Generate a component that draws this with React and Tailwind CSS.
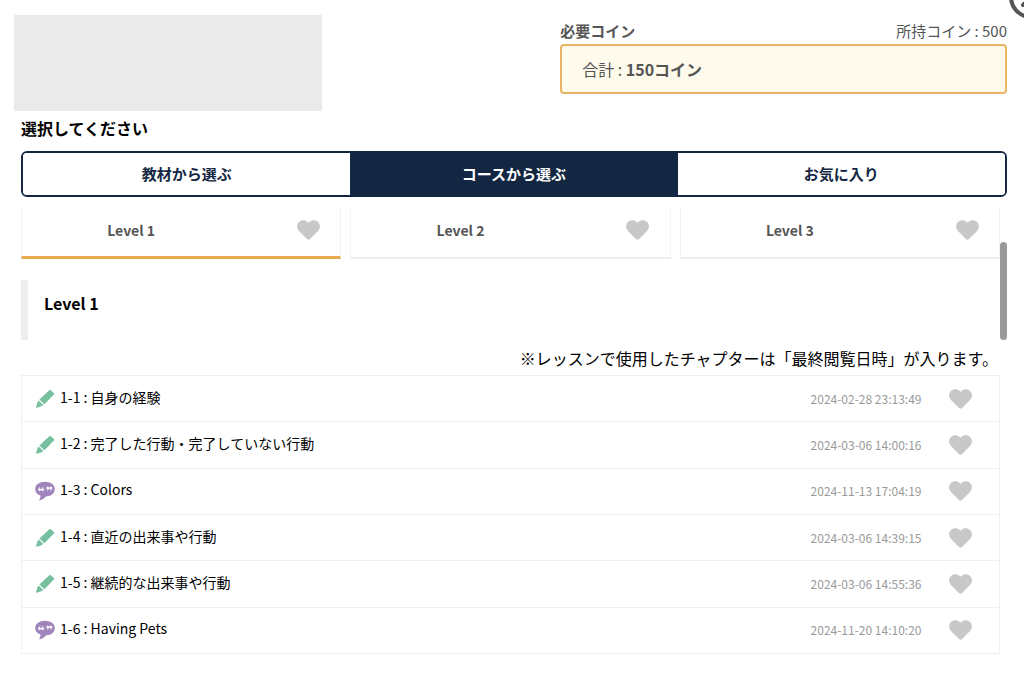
import React, { useState } from 'react';

const modes = ['教材から選ぶ', 'コースから選ぶ', 'お気に入り'];

const levels = ['Level 1', 'Level 2', 'Level 3'];

const chapters = [
  { id: '1-1', title: '自身の経験', type: 'writing', viewedAt: '2024-02-28 23:13:49' },
  { id: '1-2', title: '完了した行動・完了していない行動', type: 'writing', viewedAt: '2024-03-06 14:00:16' },
  { id: '1-3', title: 'Colors', type: 'talk', viewedAt: '2024-11-13 17:04:19' },
  { id: '1-4', title: '直近の出来事や行動', type: 'writing', viewedAt: '2024-03-06 14:39:15' },
  { id: '1-5', title: '継続的な出来事や行動', type: 'writing', viewedAt: '2024-03-06 14:55:36' },
  { id: '1-6', title: 'Having Pets', type: 'talk', viewedAt: '2024-11-20 14:10:20' },
];

const HeartIcon = () => (
  <svg viewBox="0 0 23 20" className="w-[23px] h-5" fill="currentColor" aria-hidden="true">
    <path d="M11.500 19.800c-.5 0-1-.2-1.300-.5L2.200 11.200C-.6 8.400-.6 4.300 1.900 1.900 4.400-.4 8.300-.3 10.500 1.800l1 .9 1-.9c2.200-2.100 6.100-2.200 8.600.1 2.500 2.400 2.500 6.500-.3 9.300l-8 8.100c-.3.3-.8.5-1.300.5z" />
  </svg>
);

const PencilIcon = () => (
  <svg viewBox="0 0 20 20" className="w-5 h-5 shrink-0" fill="#76bf9f" aria-hidden="true">
    <path d="M14.400 1.200a1 1 0 0 1 1.400 0l3.100 2.900a1 1 0 0 1 0 1.400l-9.500 9.700-5-4.600z" />
    <path d="M3.600 11.500l4.800 4.500-2 1.300-4.600 1.500c-.5.100-.8-.2-.7-.7l1.300-4.500z" />
  </svg>
);

const TalkIcon = () => (
  <svg viewBox="0 0 20 20" className="w-5 h-5 shrink-0" aria-hidden="true">
    <path
      d="M10 .7c5.600 0 9.800 2.900 9.800 7.200 0 4.400-3.700 7.200-8.700 7.400-1.700 2.400-4 3.900-7.300 4 1.300-1.400 1.800-2.900 1.700-4.700C2.100 13.400.2 11.100.2 7.900.2 3.600 4.400.7 10 .7z"
      fill="#a085bd"
    />
    <g fill="#fff" stroke="#fff" strokeWidth="0.8" strokeLinecap="round">
      <circle cx="4.700" cy="8.700" r="1" />
      <circle cx="7.700" cy="8.700" r="1" />
      <circle cx="12.700" cy="7" r="1" />
      <circle cx="15.700" cy="7" r="1" />
      <path d="M3.700 8.400q0-1.500 1.200-2.100M6.700 8.400q0-1.500 1.200-2.100M13.700 7.300q0 1.500-1.200 2.100M16.700 7.300q0 1.500-1.200 2.100" fill="none" />
    </g>
  </svg>
);

const CloseIcon = () => (
  <svg viewBox="0 0 44 44" className="w-11 h-11" fill="none" stroke="currentColor" strokeWidth="4" aria-hidden="true">
    <circle cx="22" cy="22" r="20" />
    <path d="M14 30l16-16M14 14l16 16" strokeLinecap="round" />
  </svg>
);

const App = () => {
  const [mode, setMode] = useState(1);
  const [level, setLevel] = useState(0);
  const [favorites, setFavorites] = useState([]);

  const toggleFavorite = (key) => {
    setFavorites(prev => prev.includes(key) ? prev.filter(k => k !== key) : [...prev, key]);
  };

  return (
    <div className="relative overflow-hidden bg-white pt-[15px] pb-5 pr-[17px] text-black font-['Noto_Sans_CJK_JP','Noto_Sans',sans-serif]">
      <button type="button" aria-label="閉じる" className="absolute -top-[25px] -right-[29px] text-[#555]">
        <CloseIcon />
      </button>

      <header className="flex justify-between pl-[14px]">
        <div className="w-[31%] h-24 bg-[#eaeaea]" />
        <div className="w-[45%] pt-1 text-[#555]">
          <div className="flex justify-between text-[15px] leading-6">
            <span className="font-bold">必要コイン</span>
            <span>所持コイン : 500</span>
          </div>
          <div className="flex items-center h-[50px] mt-px px-5 text-base bg-[#fffbec] border-2 border-[#ebb566] rounded">
            <p>合計 : <strong>150コイン</strong></p>
          </div>
        </div>
      </header>

      <main className="pl-[21px]">
        <h1 className="mt-[5px] text-base leading-6 font-bold">選択してください</h1>

        <div className="grid grid-cols-3 h-[46px] mt-[11px] overflow-hidden border-2 border-[#132743] rounded-md">
          {modes.map((label, i) => (
            <button
              key={label}
              type="button"
              onClick={() => setMode(i)}
              className={`text-[15px] font-bold ${mode === i ? 'bg-[#132743] text-white' : 'bg-white text-[#132743]'}`}
            >
              {label}
            </button>
          ))}
        </div>

        <div className="flex mt-[10px]">
          <div className="grow">
            <div className="grid grid-cols-3 gap-[9px]">
              {levels.map((name, i) => (
                <div
                  key={name}
                  className={`flex items-center h-[52px] pb-1 border-x border-x-[#f3f3f3] ${level === i ? 'border-b-3 border-b-[#e9a94f]' : 'border-b-2 border-b-[#eee]'}`}
                >
                  <button type="button" onClick={() => setLevel(i)} className="grow pr-9 text-sm font-bold text-[#555]">
                    {name}
                  </button>
                  <button
                    type="button"
                    aria-label={`${name}をお気に入りに追加`}
                    onClick={() => toggleFavorite(name)}
                    className={`flex justify-center w-16 ${favorites.includes(name) ? 'text-[#e9a94f]' : 'text-[#c8c8c8]'}`}
                  >
                    <HeartIcon />
                  </button>
                </div>
              ))}
            </div>

            <h2 className="h-[60px] mt-[21px] pt-[11px] pl-4 border-l-[7px] border-[#eee] text-base leading-6 font-bold">
              {levels[level]}
            </h2>

            <p className="mt-[6px] pr-[2px] text-base leading-6 text-right">
              ※レッスンで使用したチャプターは「最終閲覧日時」が入ります。
            </p>

            <table className="w-full h-[279px] mt-[5px] border-collapse border border-[#f0f0f0]">
              <tbody>
                {chapters.map((chapter) => (
                  <tr key={chapter.id} className="border-b border-[#f0f0f0]">
                    <td className="pl-[13px]">
                      <a href={`#${chapter.id}`} className="flex items-center gap-[5px] text-sm">
                        {chapter.type === 'writing' ? <PencilIcon /> : <TalkIcon />}
                        <span className="pb-1">{chapter.id} : {chapter.title}</span>
                      </a>
                    </td>
                    <td className="text-xs text-right text-[#999]">{chapter.viewedAt}</td>
                    <td className="w-[78px]">
                      <button
                        type="button"
                        aria-label={`${chapter.title}をお気に入りに追加`}
                        onClick={() => toggleFavorite(chapter.id)}
                        className={`flex justify-center w-full ${favorites.includes(chapter.id) ? 'text-[#e9a94f]' : 'text-[#c8c8c8]'}`}
                      >
                        <HeartIcon />
                      </button>
                    </td>
                  </tr>
                ))}
              </tbody>
            </table>
          </div>

          {/* Scrollbar */}
          <div className="w-[7px] shrink-0 pt-[35px]">
            <div className="h-[98px] bg-[#999] rounded-full" />
          </div>
        </div>
      </main>
    </div>
  );
};

export default App;
